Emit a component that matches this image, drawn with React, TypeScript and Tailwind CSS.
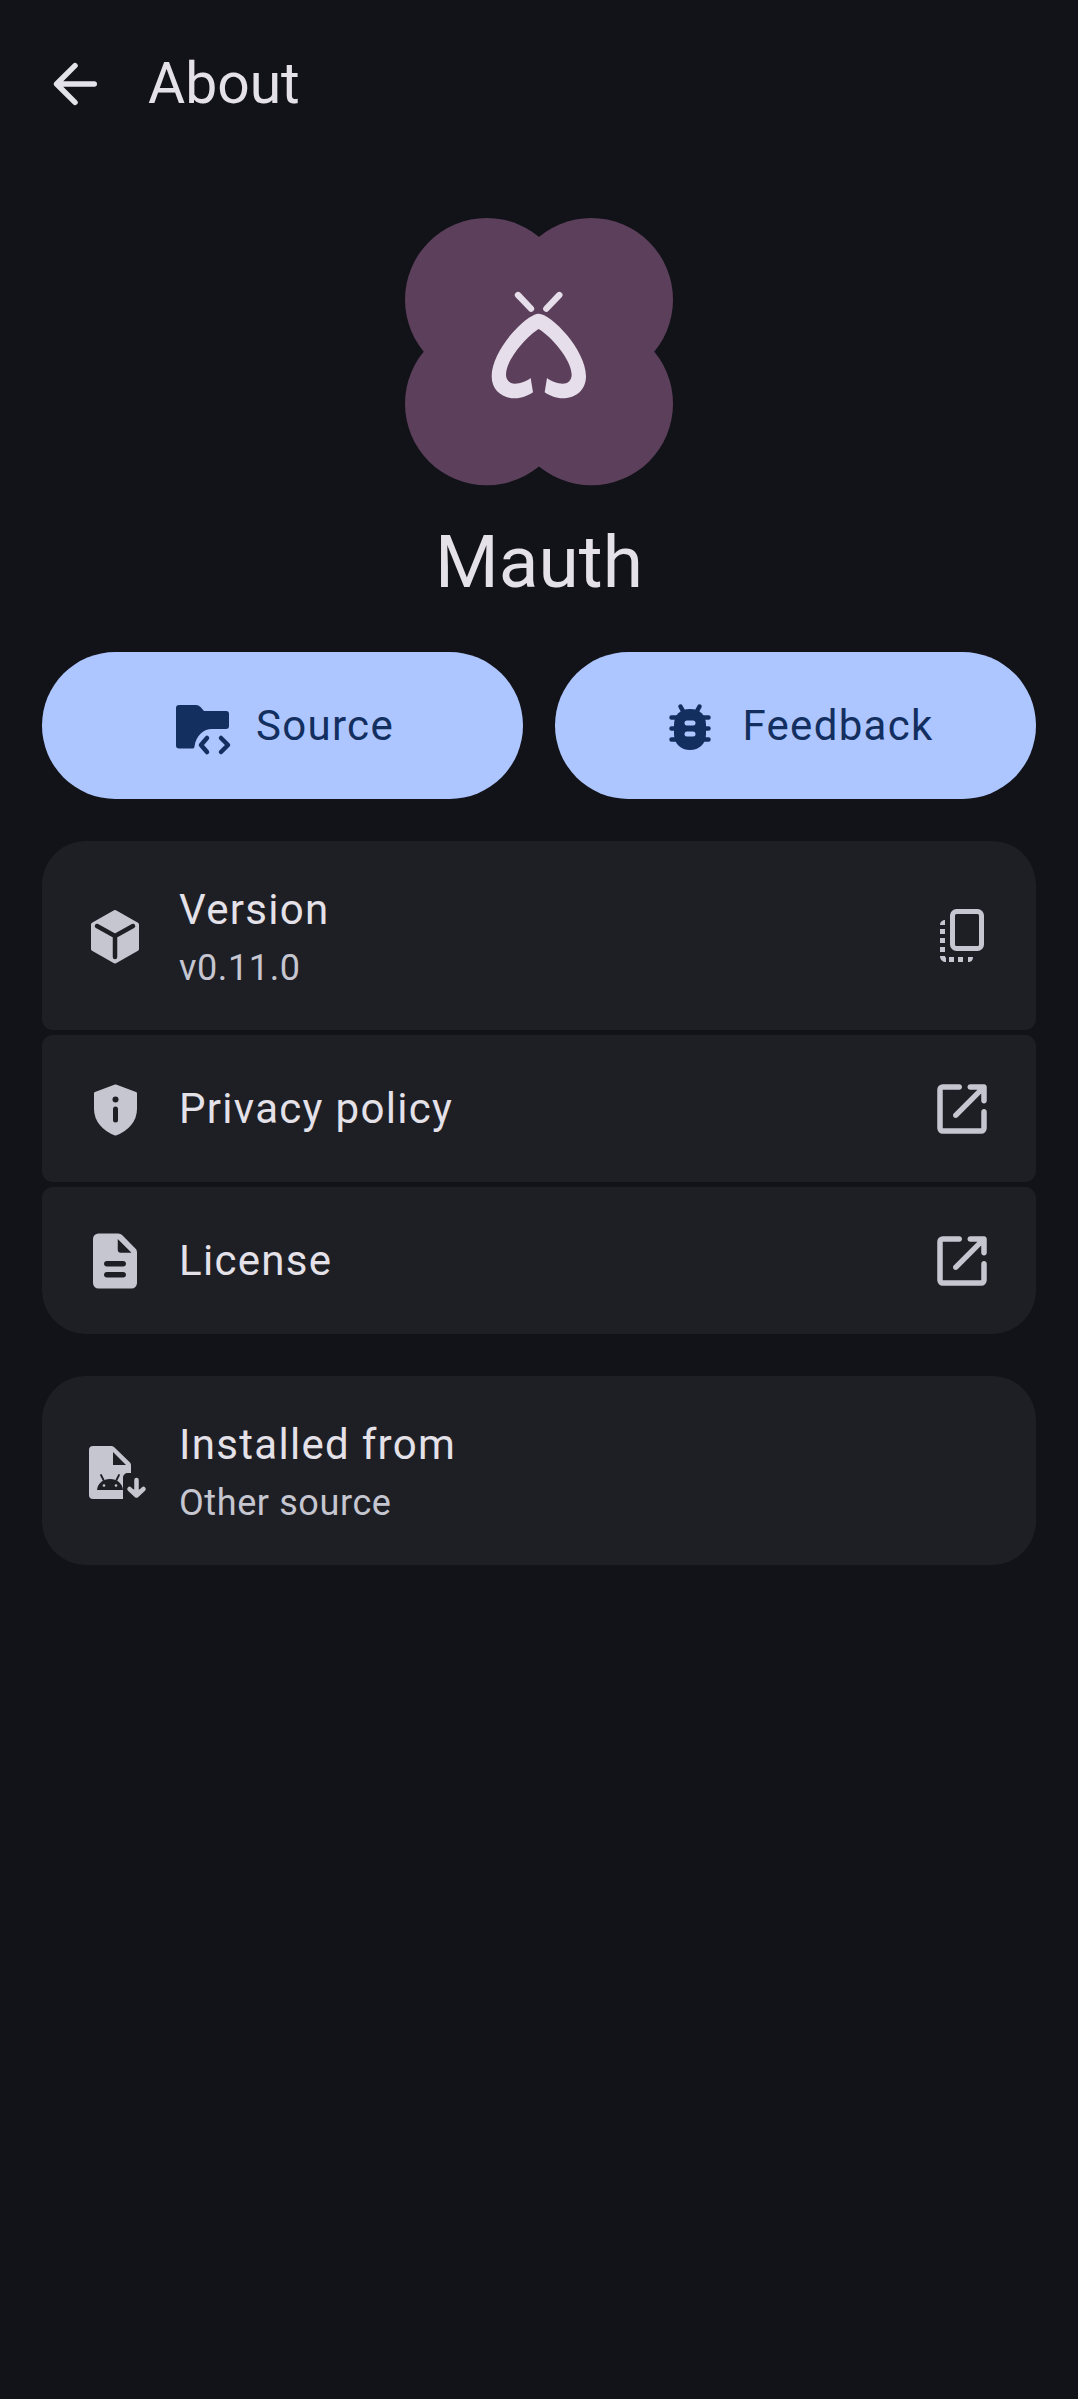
const BackIcon = () => (
  <svg viewBox="0 0 24 24" className="size-[66px]" fill="none" stroke="#e3e1e9" strokeWidth="2" strokeLinecap="round" strokeLinejoin="round">
    <path d="M19 12H5.5M12 5.3 5.3 12l6.7 6.7" />
  </svg>
);

const Logo = () => (
  <svg viewBox="75 55 804 804" className="size-[268px]">
    <g fill="#5c3f5b">
      <circle cx="320" cy="300" r="245" />
      <circle cx="634" cy="300" r="245" />
      <circle cx="320" cy="612" r="245" />
      <circle cx="634" cy="612" r="245" />
      <rect x="300" y="280" width="354" height="354" />
    </g>
    <path
      fill="#e6deea"
      d="M476 342C440 342 335 450 335 530C335 575 370 596 405 596C425 596 445 588 459 578L452 535C440 545 420 552 405 552C390 552 378 542 378 525C378 480 440 410 476 388C513 410 575 480 575 525C575 542 563 552 548 552C533 552 513 545 501 535L494 578C508 588 528 596 548 596C583 596 618 575 618 530C618 450 513 342 476 342Z"
    />
    <path stroke="#e6deea" strokeWidth="19" strokeLinecap="round" d="M414 286 453 327M538 286 499 327" />
  </svg>
);

const FolderCodeIcon = () => (
  <svg viewBox="0 0 66 66" className="size-[66px]" fill="#132f60">
    <path d="M8 12h17c2 0 3 .7 4.500 2l3.500 4h22c2.200 0 3 1.300 3 3v12c0 2-1 3-3 3H41c-8 0-16 6-17.500 17.500-.2 1.500-1 2-2 2H8c-2 0-3-1.300-3-3V15c0-2 1-3 3-3Z" />
    <path fill="none" stroke="#132f60" strokeWidth="4.500" strokeLinecap="round" strokeLinejoin="round" d="M36 45l-6 7 6 7M50 45l7 7-7 7" />
  </svg>
);

const BugIcon = () => (
  <svg viewBox="0 0 66 66" className="size-[66px]" fill="none">
    <path fill="#132f60" d="M33 16c10 0 16 6 16 16v9c0 10-7 16-16 16s-16-6-16-16v-9c0-10 6-16 16-16Z" />
    <path stroke="#132f60" strokeWidth="4.500" strokeLinecap="round" d="M26 18 23.500 13.500M40 18l2.500-4.500M14.500 24.500H51.500M14.500 35.500H51.500M14.500 46.500H51.500" />
    <rect x="27.500" y="27.500" width="11" height="5" rx="2.500" fill="#aec6ff" />
    <rect x="27.500" y="38.500" width="11" height="5" rx="2.500" fill="#aec6ff" />
  </svg>
);

const BoxIcon = () => (
  <svg viewBox="0 0 66 66" className="size-[66px]" fill="none">
    <path fill="#c5c6d0" stroke="#c5c6d0" strokeWidth="4" strokeLinejoin="round" d="M33 9 55 21.500V46L33 58.500 11 46V21.500Z" />
    <path stroke="#1e1f25" strokeWidth="4.500" strokeLinecap="round" strokeLinejoin="round" d="M15 23 33 33 51 23M33 33V54" />
  </svg>
);

const ShieldIcon = () => (
  <svg viewBox="0 0 66 66" className="size-[66px]">
    <path fill="#c5c6d0" stroke="#c5c6d0" strokeWidth="3" strokeLinejoin="round" d="M33.500 10 53.500 17.500V33C53.500 44.500 45 54 33.500 58 22 54 13.500 44.500 13.500 33V17.500Z" />
    <circle cx="33.500" cy="23.500" r="3" fill="#1e1f25" />
    <rect x="31" y="30.500" width="5" height="16" rx="2.500" fill="#1e1f25" />
  </svg>
);

const FileIcon = () => (
  <svg viewBox="0 0 24 24" className="size-[66px]" fill="#c5c6d0">
    <path d="M9 18h6q.425 0 .713-.288T16 17t-.288-.712T15 16H9q-.425 0-.712.288T8 17t.288.713T9 18m0-4h6q.425 0 .713-.288T16 13t-.288-.712T15 12H9q-.425 0-.712.288T8 13t.288.713T9 14m-3 8q-.825 0-1.412-.587T4 20V4q0-.825.588-1.412T6 2h7.175q.4 0 .763.15t.637.425l4.850 4.850q.275.275.425.638t.150.762V20q0 .825-.587 1.413T18 22zm7-14q0 .425.288.713T14 9h4l-5-5z" />
  </svg>
);

const AndroidFileIcon = () => (
  <svg viewBox="0 0 66 66" className="size-[66px]" fill="none">
    <path fill="#c5c6d0" d="M11 8h18c1.500 0 2.500.5 3.500 1.500L47.500 24c1 1 1.500 2 1.500 3.500V35h-3c-3 0-5 2-5 5v21H11c-2.500 0-4-1.500-4-4V12c0-2.500 1.500-4 4-4Z" />
    <path fill="#1e1f25" d="M31 14 44 27H31Z" />
    <path fill="#1e1f25" d="M15 52c.5-6.500 6-11 13-11s12.500 4.500 13 11Z" />
    <path stroke="#1e1f25" strokeWidth="1.800" strokeLinecap="round" d="M21.500 42 19 37M34.500 42l2.500-5" />
    <circle cx="22" cy="47.500" r="1.300" fill="#c5c6d0" />
    <circle cx="34" cy="47.500" r="1.300" fill="#c5c6d0" />
    <path stroke="#c5c6d0" strokeWidth="4.500" strokeLinecap="round" strokeLinejoin="round" d="M54.500 42V57M47.500 51l7 6.500 7-6.500" />
    <path fill="#c5c6d0" d="M48 51.500h13L54.500 58Z" />
  </svg>
);

const CopyIcon = () => (
  <svg viewBox="0 0 66 66" className="size-[66px]" fill="#c5c6d0">
    <rect x="23.500" y="8.500" width="29" height="37" rx="4" fill="none" stroke="#c5c6d0" strokeWidth="5" />
    <path d="M16 17v5h-5c0-2.500 2-5 5-5ZM11 26h5v5h-5zM11 35h5v5h-5zM11 44h5v5h-5zM11 53h5v.500c0 .5.500 1 1 1V59c-3 0-6-2-6-6ZM20 54h5v5h-5zM29 54h5v5h-5zM39 54h5c0 3-1.500 5-5 5Z" />
  </svg>
);

const OpenIcon = () => (
  <svg viewBox="0 0 24 24" className="size-[66px]" fill="#c5c6d0">
    <path d="M5 21q-.825 0-1.413-.588T3 19V5q0-.825.587-1.413T5 3h6q.425 0 .713.288T12 4t-.288.713T11 5H5v14h14v-6q0-.425.288-.712T20 12t.713.288T21 13v6q0 .825-.588 1.413T19 21zM19 6.400l-8.600 8.600q-.275.275-.7.275t-.7-.275t-.275-.7t.275-.7L17.600 5H15q-.425 0-.712-.288T14 4t.288-.712T15 3h5q.425 0 .713.288T21 4v5q0 .425-.288.713T20 10t-.712-.288T19 9z" />
  </svg>
);

interface RowProps {
  icon: React.ReactNode;
  title: string;
  subtitle?: string;
  action?: React.ReactNode;
  className: string;
}

const Row: React.FC<RowProps> = ({ icon, title, subtitle, action, className }) => (
  <div className={`flex items-center gap-[31px] bg-[#1e1f25] pl-10 pr-[41px] ${className}`}>
    {icon}
    <div className={`flex flex-1 flex-col ${subtitle ? "pt-[6px]" : ""}`}>
      <span className="text-[42px] leading-[56px] tracking-[1.3px] text-[#e4e1e9]">{title}</span>
      {subtitle && <span className="mt-[3px] text-[36px] leading-[54px] tracking-[0.6px] text-[#c5c6d0]">{subtitle}</span>}
    </div>
    {action}
  </div>
);

const ActionButton = ({ icon, label }: { icon: React.ReactNode; label: string }) => (
  <button className="flex h-[147px] flex-1 items-center justify-center gap-[19px] rounded-full bg-[#aec6ff] text-[42px] tracking-[1.3px] text-[#132f60]">
    {icon}
    {label}
  </button>
);

export default function App() {
  return (
    <div className="flex h-[2399px] flex-col bg-[#121318] font-['Roboto',sans-serif]">
      <header className="flex h-[168px] items-center gap-[40px] pl-[42px]">
        <BackIcon />
        <h1 className="text-[57px] text-[#e4e1e9]">About</h1>
      </header>
      <div className="mt-[50px] flex flex-col items-center">
        <Logo />
        <h2 className="mt-[33px] text-[73px] leading-[86px] text-[#e4e1e9]">Mauth</h2>
      </div>
      <div className="mt-[47px] flex gap-[32px] px-[42px]">
        <ActionButton icon={<FolderCodeIcon />} label="Source" />
        <ActionButton icon={<BugIcon />} label="Feedback" />
      </div>
      <div className="mt-[42px] flex flex-col gap-[5px] px-[42px]">
        <Row className="h-[189px] rounded-t-[44px] rounded-b-[11px]" icon={<BoxIcon />} title="Version" subtitle="v0.11.0" action={<CopyIcon />} />
        <Row className="h-[147px] rounded-[11px]" icon={<ShieldIcon />} title="Privacy policy" action={<OpenIcon />} />
        <Row className="h-[147px] rounded-t-[11px] rounded-b-[44px]" icon={<FileIcon />} title="License" action={<OpenIcon />} />
      </div>
      <div className="mt-[42px] px-[42px]">
        <Row className="h-[189px] rounded-[44px]" icon={<AndroidFileIcon />} title="Installed from" subtitle="Other source" />
      </div>
    </div>
  );
}
